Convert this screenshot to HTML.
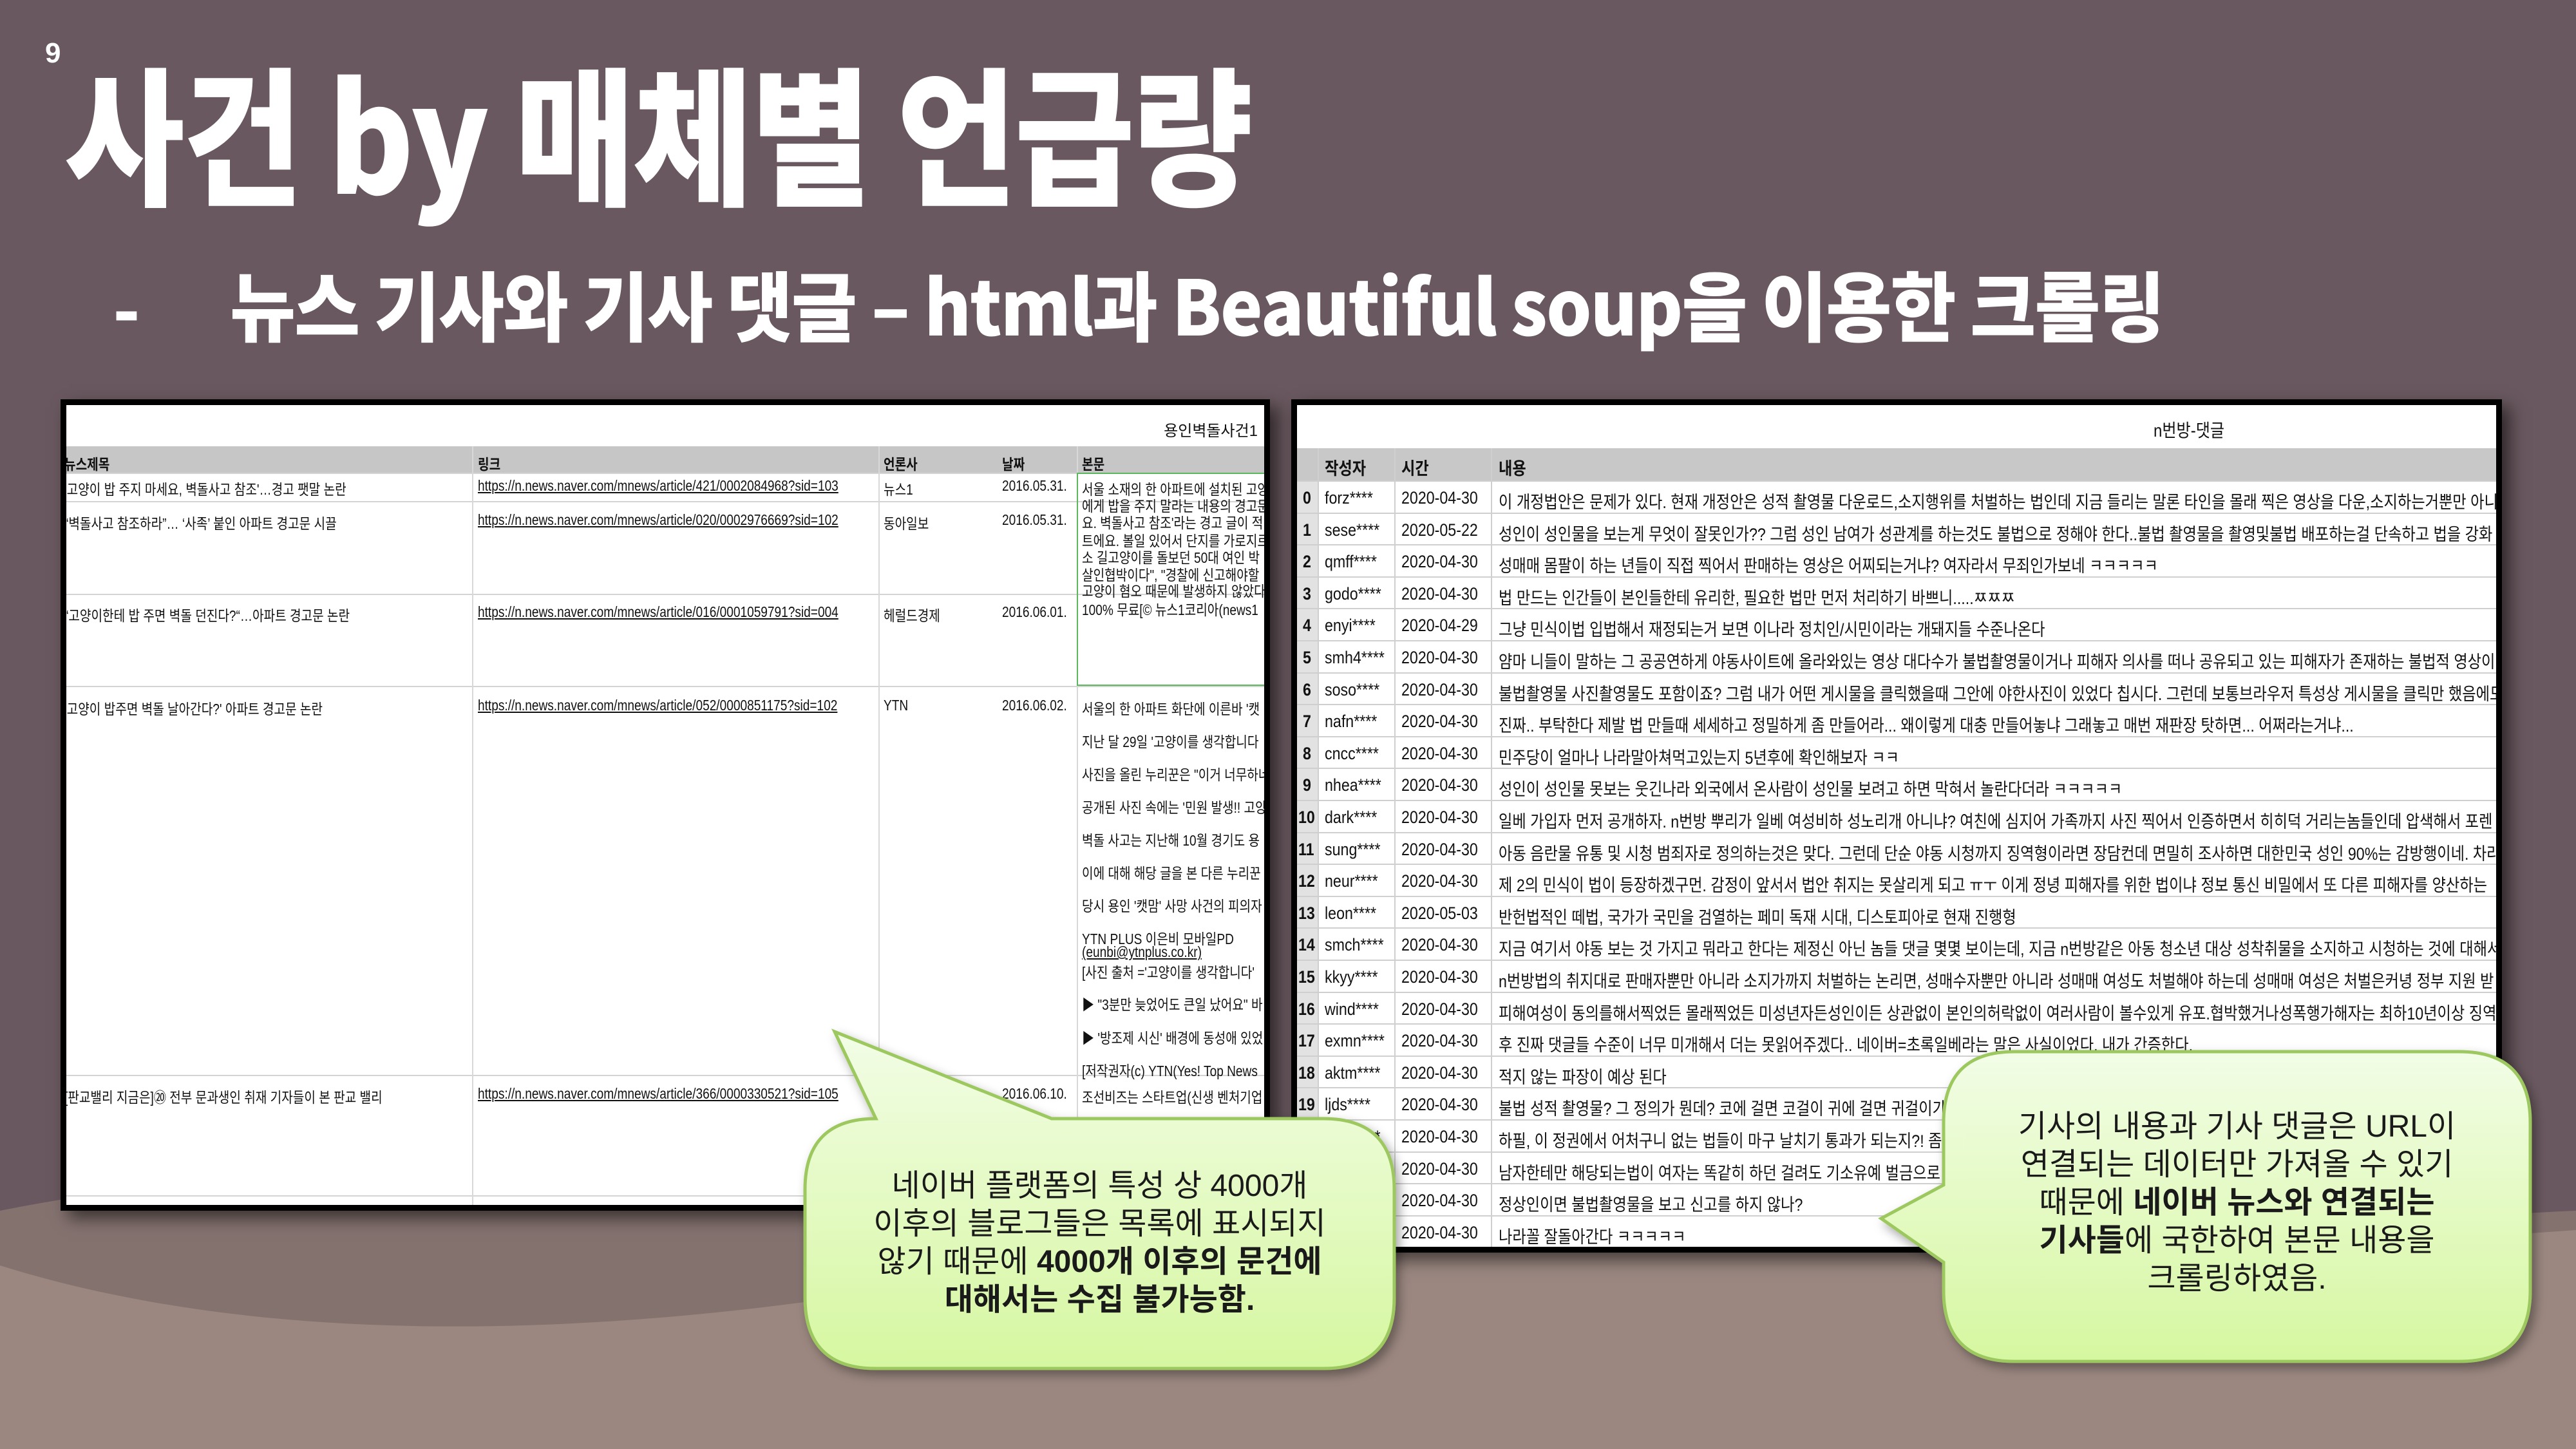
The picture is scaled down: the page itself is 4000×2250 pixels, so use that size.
<!DOCTYPE html>
<html><head><meta charset="utf-8"><style>
*{margin:0;padding:0;box-sizing:border-box}
body{width:4000px;height:2250px;overflow:hidden;background:#69585f;position:relative;font-family:"Liberation Sans","Noto Sans CJK KR",sans-serif}
.a{position:absolute;white-space:nowrap}
.box{position:absolute;background:#fff;border:9px solid #000;overflow:hidden;box-shadow:12px 12px 24px rgba(0,0,0,.55)}
.t{position:absolute;white-space:nowrap;font-size:25px;color:#111;transform:scaleX(.86);transform-origin:0 0;font-family:"Liberation Sans","Noto Sans CJK KR",sans-serif}
.L .t{font-size:23px;transform:scaleX(.83)}
.hl{position:absolute;left:0;right:0;height:2px;background:#d4d4d4}
.vl{position:absolute;top:64px;bottom:0;width:2px;background:#d8d8d8}
.u{text-decoration:underline}
.r{position:absolute;left:0;right:0;height:50px;border-top:2px solid #cfcfcf}
.r .t{top:10px;font-size:27px}
.bt{position:absolute;text-align:center;font-size:48px;line-height:59px;color:#1a1a1a;font-family:"Liberation Sans","Noto Sans CJK KR",sans-serif}
</style></head><body>
<svg class="a" style="left:0;top:0" width="4000" height="2250">
<path d="M0,1880 C600,1760 1200,1850 2000,1950 C2800,2050 3500,1900 4000,1880 L4000,2250 L0,2250Z" fill="#84726f"/>
<path d="M0,1965 C400,2090 900,2080 1400,2000 C2200,1880 3200,1970 4000,1910 L4000,2250 L0,2250Z" fill="#9b8780"/>
</svg>
<div class="a" style="left:70px;top:58px;font-size:44px;color:#fff;font-weight:bold">9</div>
<div class="a" style="left:100px;top:50px;font-size:232px;line-height:300px;color:#fff;font-weight:900;font-family:'Noto Sans CJK KR',sans-serif;transform:scaleX(.875);transform-origin:0 0;letter-spacing:-4px">사건 by 매체별 언급량</div>
<div class="a" style="left:175px;top:405px;font-size:112px;line-height:140px;color:#fff;font-weight:900;font-family:'Noto Sans CJK KR',sans-serif">-</div>
<div class="a" style="left:357px;top:395px;font-size:118px;line-height:150px;color:#fff;font-weight:900;font-family:'Noto Sans CJK KR',sans-serif;transform:scaleX(.94);transform-origin:0 0;letter-spacing:-2px">뉴스 기사와 기사 댓글 – html과 Beautiful soup을 이용한 크롤링</div>

<!-- left table -->
<div class="box L" style="left:94px;top:620px;width:1878px;height:1260px">
<div class="t" style="right:10px;top:20px;transform:none;font-size:24px">용인벽돌사건1</div>
<div class="a" style="left:0;right:0;top:64px;height:41px;background:#c6c6c6"></div>
<div class="t" style="left:-3px;top:73px;font-weight:bold">뉴스제목</div>
<div class="t" style="left:639px;top:73px;font-weight:bold">링크</div>
<div class="t" style="left:1269px;top:73px;font-weight:bold">언론사</div>
<div class="t" style="left:1453px;top:73px;font-weight:bold">날짜</div>
<div class="t" style="left:1577px;top:73px;font-weight:bold">본문</div>
<div class="hl" style="top:105px"></div><div class="hl" style="top:149px"></div><div class="hl" style="top:293px"></div><div class="hl" style="top:436px"></div><div class="hl" style="top:1040px"></div><div class="hl" style="top:1227px"></div>
<div class="vl" style="left:630px"></div><div class="vl" style="left:1261px"></div><div class="vl" style="left:1569px"></div>
<div class="a" style="left:1569px;top:105px;width:300px;height:331px;border:2px solid #5cb85c"></div>
<div class="t" style="left:-3px;top:112px">'고양이 밥 주지 마세요, 벽돌사고 참조'…경고 팻말 논란</div>
<div class="t u" style="left:639px;top:112px">https://n.news.naver.com/mnews/article/421/0002084968?sid=103</div>
<div class="t" style="left:1269px;top:112px">뉴스1</div><div class="t" style="left:1453px;top:112px">2016.05.31.</div>
<div class="t" style="left:-3px;top:165px">“벽돌사고 참조하라”… ‘사족’ 붙인 아파트 경고문 시끌</div>
<div class="t u" style="left:639px;top:165px">https://n.news.naver.com/mnews/article/020/0002976669?sid=102</div>
<div class="t" style="left:1269px;top:165px">동아일보</div><div class="t" style="left:1453px;top:165px">2016.05.31.</div>
<div class="t" style="left:-3px;top:308px">“고양이한테 밥 주면 벽돌 던진다?“…아파트 경고문 논란</div>
<div class="t u" style="left:639px;top:308px">https://n.news.naver.com/mnews/article/016/0001059791?sid=004</div>
<div class="t" style="left:1269px;top:308px">헤럴드경제</div><div class="t" style="left:1453px;top:308px">2016.06.01.</div>
<div class="t" style="left:-3px;top:453px">'고양이 밥주면 벽돌 날아간다?' 아파트 경고문 논란</div>
<div class="t u" style="left:639px;top:453px">https://n.news.naver.com/mnews/article/052/0000851175?sid=102</div>
<div class="t" style="left:1269px;top:453px">YTN</div><div class="t" style="left:1453px;top:453px">2016.06.02.</div>
<div class="t" style="left:-3px;top:1056px">[판교밸리 지금은]⑳ 전부 문과생인 취재 기자들이 본 판교 밸리</div>
<div class="t u" style="left:639px;top:1056px">https://n.news.naver.com/mnews/article/366/0000330521?sid=105</div>
<div class="t" style="left:1453px;top:1056px">2016.06.10.</div>
<div class="t" style="left:1577px;top:112px">서울 소재의 한 아파트에 설치된 고양</div>
<div class="t" style="left:1577px;top:138px">에게 밥을 주지 말라는 내용의 경고문</div>
<div class="t" style="left:1577px;top:164px">요. 벽돌사고 참조'라는 경고 글이 적</div>
<div class="t" style="left:1577px;top:192px">트에요. 볼일 있어서 단지를 가로지르</div>
<div class="t" style="left:1577px;top:218px">소 길고양이를 돌보던 50대 여인 박</div>
<div class="t" style="left:1577px;top:245px">살인협박이다", "경찰에 신고해야할</div>
<div class="t" style="left:1577px;top:270px">고양이 혐오 때문에 발생하지 않았다</div>
<div class="t" style="left:1577px;top:299px">100% 무료[© 뉴스1코리아(news1</div>
<div class="t" style="left:1577px;top:453px">서울의 한 아파트 화단에 이른바 '캣</div>
<div class="t" style="left:1577px;top:504px">지난 달 29일 '고양이를 생각합니다</div>
<div class="t" style="left:1577px;top:555px">사진을 올린 누리꾼은 "이거 너무하네</div>
<div class="t" style="left:1577px;top:606px">공개된 사진 속에는 '민원 발생!! 고양</div>
<div class="t" style="left:1577px;top:657px">벽돌 사고는 지난해 10월 경기도 용</div>
<div class="t" style="left:1577px;top:708px">이에 대해 해당 글을 본 다른 누리꾼</div>
<div class="t" style="left:1577px;top:759px">당시 용인 '캣맘' 사망 사건의 피의자</div>
<div class="t" style="left:1577px;top:810px">YTN PLUS 이은비 모바일PD</div>
<div class="t u" style="left:1577px;top:836px">(eunbi@ytnplus.co.kr)</div>
<div class="t" style="left:1577px;top:862px">[사진 출처 ='고양이를 생각합니다'</div>
<div class="t" style="left:1577px;top:912px">▶ "3분만 늦었어도 큰일 났어요" 바</div>
<div class="t" style="left:1577px;top:964px">▶ '방조제 시신' 배경에 동성애 있었</div>
<div class="t" style="left:1577px;top:1015px">[저작권자(c) YTN(Yes! Top News</div>
<div class="t" style="left:1577px;top:1056px">조선비즈는 스타트업(신생 벤처기업</div>
</div>

<!-- right table -->
<div class="box" style="left:2005px;top:620px;width:1880px;height:1325px">
<div class="t" style="left:1330px;top:18px;font-size:28px">n번방-댓글</div>
<div class="a" style="left:0;right:0;top:67px;height:50px;background:#c8c8c8"></div>
<div class="a" style="left:0;top:117px;width:32px;bottom:0;background:#e2e2e2"></div>
<div class="t" style="left:43px;top:77px;font-size:27px;font-weight:bold">작성자</div>
<div class="t" style="left:162px;top:77px;font-size:27px;font-weight:bold">시간</div>
<div class="t" style="left:313px;top:77px;font-size:27px;font-weight:bold">내용</div>
<div class="a" style="left:32px;top:67px;bottom:0;width:2px;background:#cfcfcf"></div>
<div class="a" style="left:151px;top:67px;bottom:0;width:2px;background:#cfcfcf"></div>
<div class="a" style="left:301px;top:67px;bottom:0;width:2px;background:#cfcfcf"></div>
<div id="rows"></div>
</div>
<script>
var d=[["forz****","2020-04-30","이 개정법안은 문제가 있다. 현재 개정안은 성적 촬영물 다운로드,소지행위를 처벌하는 법인데 지금 들리는 말론 타인을 몰래 찍은 영상을 다운,소지하는거뿐만 아니"],
["sese****","2020-05-22","성인이 성인물을 보는게 무엇이 잘못인가?? 그럼 성인 남여가 성관계를 하는것도 불법으로 정해야 한다..불법 촬영물을 촬영및불법 배포하는걸 단속하고 법을 강화"],
["qmff****","2020-04-30","성매매 몸팔이 하는 년들이 직접 찍어서 판매하는 영상은 어찌되는거냐? 여자라서 무죄인가보네 ㅋㅋㅋㅋㅋ"],
["godo****","2020-04-30","법 만드는 인간들이 본인들한테 유리한, 필요한 법만 먼저 처리하기 바쁘니.....ㅉㅉㅉ"],
["enyi****","2020-04-29","그냥 민식이법 입법해서 재정되는거 보면 이나라 정치인/시민이라는 개돼지들 수준나온다"],
["smh4****","2020-04-30","얌마 니들이 말하는 그 공공연하게 야동사이트에 올라와있는 영상 대다수가 불법촬영물이거나 피해자 의사를 떠나 공유되고 있는 피해자가 존재하는 불법적 영상이"],
["soso****","2020-04-30","불법촬영물 사진촬영물도 포함이죠? 그럼 내가 어떤 게시물을 클릭했을때 그안에 야한사진이 있었다 칩시다. 그런데 보통브라우저 특성상 게시물을 클릭만 했음에도"],
["nafn****","2020-04-30","진짜.. 부탁한다 제발 법 만들때 세세하고 정밀하게 좀 만들어라... 왜이렇게 대충 만들어놓냐 그래놓고 매번 재판장 탓하면... 어쩌라는거냐..."],
["cncc****","2020-04-30","민주당이 얼마나 나라말아쳐먹고있는지 5년후에 확인해보자 ㅋㅋ"],
["nhea****","2020-04-30","성인이 성인물 못보는 웃긴나라 외국에서 온사람이 성인물 보려고 하면 막혀서 놀란다더라 ㅋㅋㅋㅋㅋ"],
["dark****","2020-04-30","일베 가입자 먼저 공개하자. n번방 뿌리가 일베 여성비하 성노리개 아니냐? 여친에 심지어 가족까지 사진 찍어서 인증하면서 히히덕 거리는놈들인데 압색해서 포렌"],
["sung****","2020-04-30","아동 음란물 유통 및 시청 범죄자로 정의하는것은 맞다. 그런데 단순 야동 시청까지 징역형이라면 장담컨데 면밀히 조사하면 대한민국 성인 90%는 감방행이네. 차라"],
["neur****","2020-04-30","제 2의 민식이 법이 등장하겠구먼. 감정이 앞서서 법안 취지는 못살리게 되고 ㅠㅜ 이게 정녕 피해자를 위한 법이냐 정보 통신 비밀에서 또 다른 피해자를 양산하는"],
["leon****","2020-05-03","반헌법적인 떼법, 국가가 국민을 검열하는 페미 독재 시대, 디스토피아로 현재 진행형"],
["smch****","2020-04-30","지금 여기서 야동 보는 것 가지고 뭐라고 한다는 제정신 아닌 놈들 댓글 몇몇 보이는데, 지금 n번방같은 아동 청소년 대상 성착취물을 소지하고 시청하는 것에 대해서"],
["kkyy****","2020-04-30","n번방법의 취지대로 판매자뿐만 아니라 소지가까지 처벌하는 논리면, 성매수자뿐만 아니라 성매매 여성도 처벌해야 하는데 성매매 여성은 처벌은커녕 정부 지원 받"],
["wind****","2020-04-30","피해여성이 동의를해서찍었든 몰래찍었든 미성년자든성인이든 상관없이 본인의허락없이 여러사람이  볼수있게 유포.협박했거나성폭행가해자는 최하10년이상 징역"],
["exmn****","2020-04-30","후 진짜 댓글들 수준이 너무 미개해서 더는 못읽어주겠다.. 네이버=초록일베라는 말은 사실이었다. 내가 간증한다."],
["aktm****","2020-04-30","적지 않는 파장이 예상 된다"],
["ljds****","2020-04-30","불법 성적 촬영물? 그 정의가 뭔데? 코에 걸면 코걸이 귀에 걸면 귀걸이가"],
["bomi****","2020-04-30","하필, 이 정권에서 어처구니 없는 법들이 마구 날치기 통과가 되는지?! 좀"],
["kimh****","2020-04-30","남자한테만 해당되는법이 여자는 똑같히 하던 걸려도 기소유예 벌금으로"],
["park****","2020-04-30","정상인이면 불법촬영물을 보고 신고를 하지 않나?"],
["lees****","2020-04-30","나라꼴 잘돌아간다 ㅋㅋㅋㅋㅋ"]];
var h="";for(var i=0;i<d.length;i++){h+='<div class="r" style="top:'+(117+i*49.6)+'px"><div class="t" style="left:'+(i<10?9:2)+'px;font-weight:bold">'+i+'</div><div class="t" style="left:43px">'+d[i][0]+'</div><div class="t" style="left:162px">'+d[i][1]+'</div><div class="t" style="left:313px">'+d[i][2]+'</div></div>';}
document.getElementById("rows").innerHTML=h;
</script>

<svg class="a" style="left:0;top:0" width="4000" height="2250">
<defs><linearGradient id="g" x1="0" y1="0" x2="0" y2="1"><stop offset="0" stop-color="#f2fde6"/><stop offset="1" stop-color="#d6f7a0"/></linearGradient>
<filter id="s" x="-10%" y="-10%" width="130%" height="130%"><feDropShadow dx="6" dy="8" stdDeviation="8" flood-color="#000" flood-opacity=".35"/></filter></defs>
<path filter="url(#s)" d="M1360,1737 L1296,1602 L1633,1737 L2055,1737 Q2165,1737 2165,1847 L2165,2015 Q2165,2125 2055,2125 L1360,2125 Q1250,2125 1250,2015 L1250,1847 Q1250,1737 1360,1737Z" fill="url(#g)" stroke="#9cc85e" stroke-width="5"/>
<path filter="url(#s)" d="M3128,1633 L3819,1633 Q3929,1633 3929,1743 L3929,2004 Q3929,2114 3819,2114 L3128,2114 Q3018,2114 3018,2004 L3018,1960 L2921,1892 L3018,1840 L3018,1743 Q3018,1633 3128,1633Z" fill="url(#g)" stroke="#9cc85e" stroke-width="5"/>
</svg>
<div class="bt" style="left:1250px;width:915px;top:1812px">네이버 플랫폼의 특성 상 4000개<br>이후의 블로그들은 목록에 표시되지<br>않기 때문에 <b>4000개 이후의 문건에</b><br><b>대해서는 수집 불가능함.</b></div>
<div class="bt" style="left:3018px;width:911px;top:1720px">기사의 내용과 기사 댓글은 URL이<br>연결되는 데이터만 가져올 수 있기<br>때문에 <b>네이버 뉴스와 연결되는</b><br><b>기사들</b>에 국한하여 본문 내용을<br>크롤링하였음.</div>
</body></html>
